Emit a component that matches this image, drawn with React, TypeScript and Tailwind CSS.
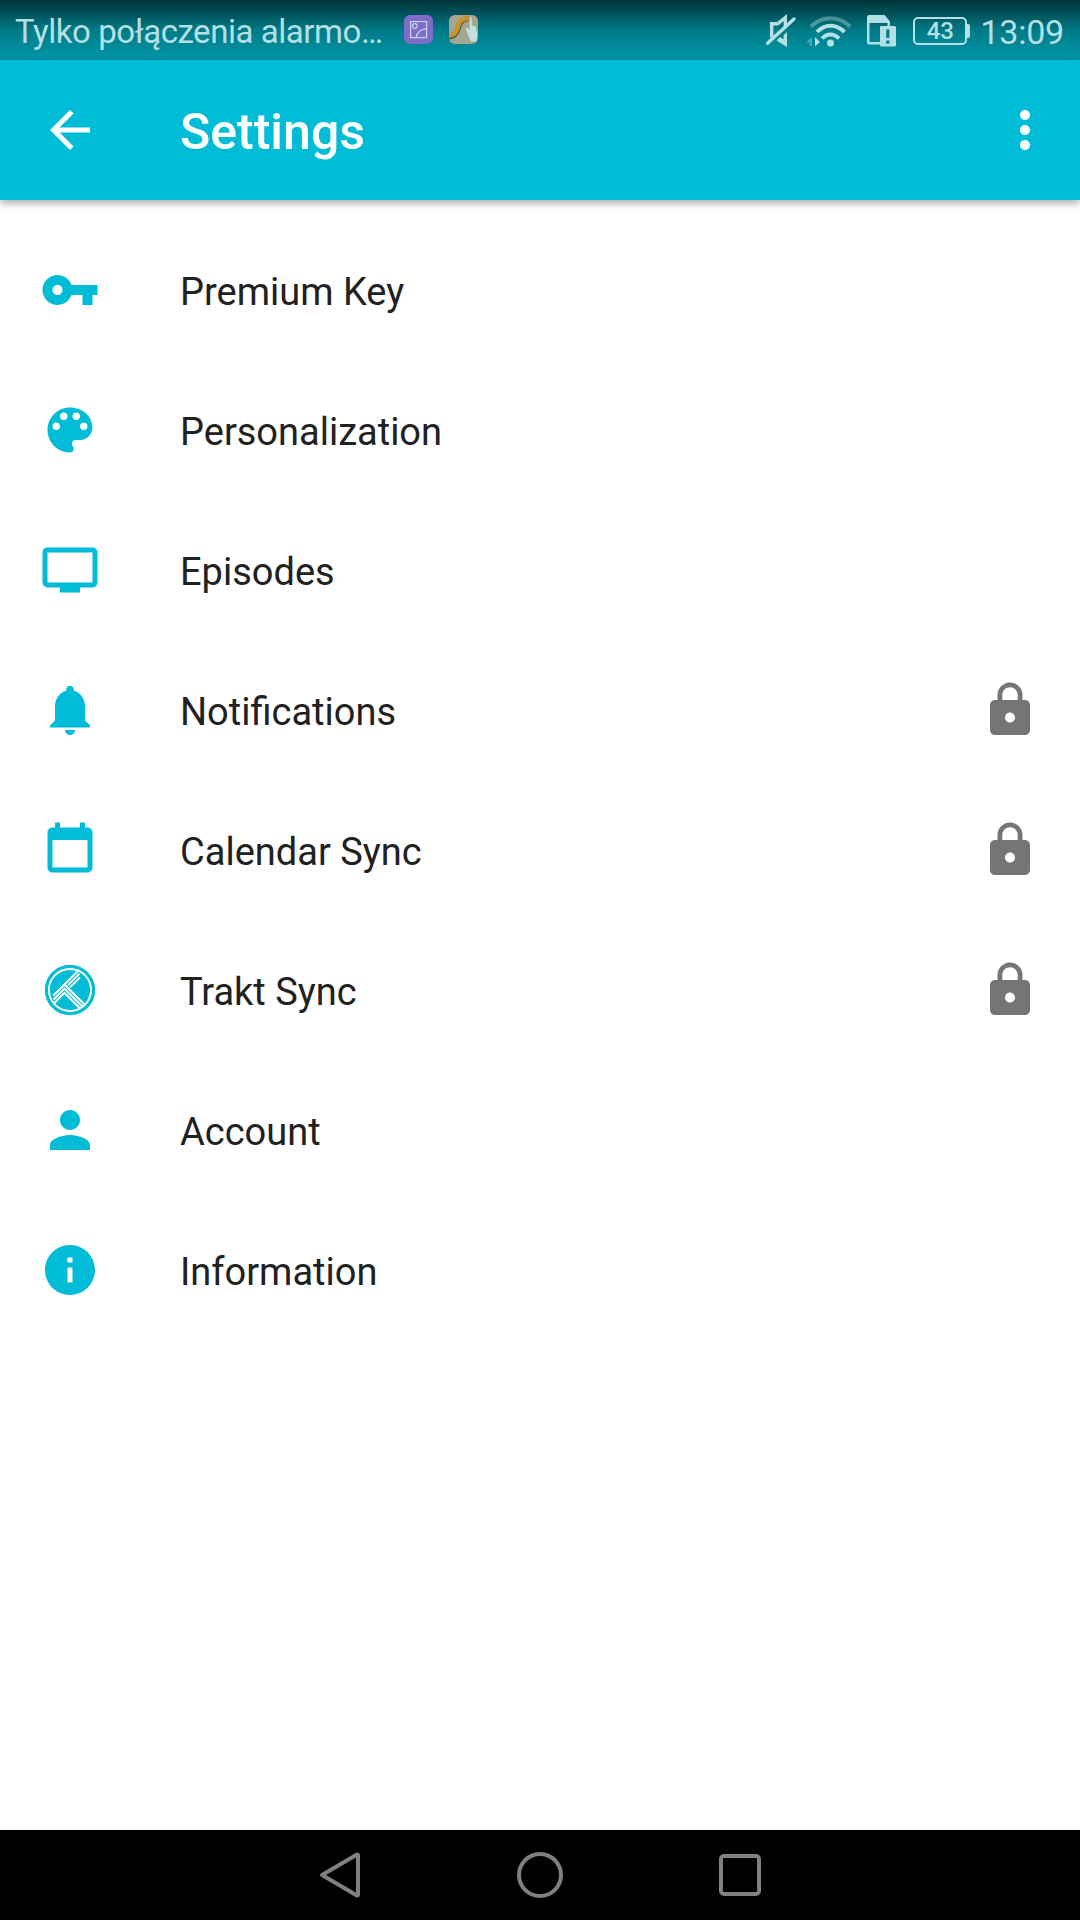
import type { ReactNode } from "react";
import {
  MdArrowBack,
  MdInfo,
  MdLock,
  MdMoreVert,
  MdPerson,
  MdPersonalVideo,
  MdVpnKey,
} from "react-icons/md";
import { SiTrakt } from "react-icons/si";

type SettingsItem = {
  label: string;
  icon: ReactNode;
  locked?: boolean;
};

function PaletteIcon() {
  return (
    <svg viewBox="0 0 24 24" className="size-[60px]" fill="currentColor">
      <path d="M12 3c-4.97 0-9 4.03-9 9s4.03 9 9 9c.83 0 1.5-.67 1.5-1.5 0-.39-.15-.74-.39-1.01-.23-.26-.38-.61-.38-.99 0-.83.67-1.5 1.5-1.5H16c2.76 0 5-2.24 5-5 0-4.42-4.03-8-9-8zm-5.5 9c-.83 0-1.5-.67-1.5-1.5S5.67 9 6.5 9 8 9.67 8 10.5 7.33 12 6.5 12zm3-4C8.67 8 8 7.33 8 6.5S8.67 5 9.5 5s1.5.67 1.5 1.5S10.33 8 9.5 8zm5 0c-.83 0-1.5-.67-1.5-1.5S13.67 5 14.5 5s1.5.67 1.5 1.5S15.33 8 14.5 8zm3 4c-.83 0-1.5-.67-1.5-1.5S16.67 9 17.5 9s1.5.67 1.5 1.5-.67 1.5-1.5 1.5z" />
    </svg>
  );
}

function BellIcon() {
  return (
    <svg viewBox="0 0 24 24" className="size-[60px]" fill="currentColor">
      <path d="M12 22c1.1 0 2-.9 2-2h-4c0 1.1.89 2 2 2zm6-5.8v-5.6c0-3.07-1.8-5.6-4.5-6.28V3.8c0-.83-.67-1.5-1.5-1.5s-1.5.67-1.5 1.5v.52C7.8 5 6 7.52 6 10.6v5.6l-2 1.9v.9h16v-.9z" />
    </svg>
  );
}

function CalendarIcon() {
  return (
    <svg viewBox="0 0 24 24" className="size-[60px]" fill="currentColor">
      <path d="M16 1v2H8V1H6v2H5c-1.11 0-1.99.9-1.99 2L3 19c0 1.1.89 2 2 2h14c1.1 0 2-.9 2-2V5c0-1.1-.9-2-2-2h-1V1h-2zm3 18H5V8h14v11z" />
    </svg>
  );
}

function TraktIcon() {
  return (
    <span className="relative size-[50px]">
      <SiTrakt className="size-[50px]" />
      <span className="absolute inset-0 rounded-full border-3 border-current" />
    </span>
  );
}

const items: SettingsItem[] = [
  { label: "Premium Key", icon: <MdVpnKey className="size-[60px]" /> },
  { label: "Personalization", icon: <PaletteIcon /> },
  { label: "Episodes", icon: <MdPersonalVideo className="size-[60px]" /> },
  { label: "Notifications", icon: <BellIcon />, locked: true },
  { label: "Calendar Sync", icon: <CalendarIcon />, locked: true },
  { label: "Trakt Sync", icon: <TraktIcon />, locked: true },
  { label: "Account", icon: <MdPerson className="size-[60px]" /> },
  { label: "Information", icon: <MdInfo className="size-[60px]" /> },
];

function GalleryBadge() {
  return (
    <svg viewBox="0 0 29 29" className="mb-0.5 ml-[21px] size-[29px]">
      <rect width="29" height="29" rx="6" fill="#7f6cc8" />
      <g fill="none" stroke="#c3d6ee" strokeWidth="1.2">
        <rect x="6.6" y="6.6" width="16" height="16" />
        <circle cx="10.8" cy="11" r="2.4" />
        <path d="M12 22.6c1-5 4.5-8.5 10.6-9" />
      </g>
    </svg>
  );
}

function GestureBadge() {
  return (
    <svg viewBox="0 0 29 29" className="mb-0.5 ml-4 size-[29px]">
      <clipPath id="gesture">
        <rect width="29" height="29" rx="6" />
      </clipPath>
      <g clipPath="url(#gesture)" fill="none">
        <rect width="29" height="29" fill="#a3a78f" />
        <path d="M0 22c5 0 8-3 9.5-9S13 4 20 3.5" stroke="#54604f" strokeWidth="5" />
        <path d="M0 20.5c5 0 7.5-3 9-9S13 3.5 20 3" stroke="#c9932b" strokeWidth="4.5" />
        <path
          d="M20.8 2q1-.8 1.7.5l.5 8 4 1.5 1.3 8-1 6.5h-5.5l-2.5-6-2.8-7q.8-1.5 2.3 0l1.7 1.5z"
          fill="#c6e0e0"
        />
      </g>
    </svg>
  );
}

function MutedIcon() {
  return (
    <svg viewBox="766 12 30 34" className="h-[34px] w-[30px]">
      <g fill="none" stroke="currentColor" strokeWidth="3.4">
        <path d="M771.7 36.5V22.7h6l7.6-6.2V27" />
        <path d="M767.5 42.3l26.5-24.3" strokeLinecap="round" />
      </g>
      <path d="M787 31v15l-10.5-6.5 3.5-3.5 3.6 2.4v-4.2z" fill="currentColor" />
    </svg>
  );
}

function WifiIcon() {
  return (
    <svg viewBox="806 12 46 34" className="ml-2.5 h-[34px] w-[46px]">
      <g fill="none" stroke="currentColor" strokeWidth="4">
        <path d="M811 25.5c11-11 28-11 39 0" opacity=".4" />
        <path d="M817 31c8-8.500 19-8.500 27.500 0" />
        <path d="M822 37.500c5-5.500 12-5.500 17 0" />
      </g>
      <circle cx="830.5" cy="42" r="3.5" fill="currentColor" />
      <path d="M812 36v9h-2.5v-3.5H806z" fill="currentColor" opacity=".4" />
      <path d="M815 36l5 5-5 4.5z" fill="currentColor" />
    </svg>
  );
}

function SimAlertIcon() {
  return (
    <svg viewBox="866 12 30 34" className="ml-3.5 h-[34px] w-[30px]">
      <path
        d="M867 16q0-2 2-2h15.5l5.5 6.5V25h-2.5v-3h-18v19H880v2.5h-11q-2 0-2-2z"
        fill="currentColor"
      />
      <path
        fillRule="evenodd"
        d="M881 25h13.5q1.5 0 1.500 1.500V44q0 1.500-1.500 1.500H881q-1 0-1-1V26q0-1 1-1zm5.200 3.500v8.500h3.200v-8.500zm0 11v3.200h3.200v-3.200z"
        fill="currentColor"
      />
    </svg>
  );
}

function Battery() {
  return (
    <div className="mt-0.5 ml-[17px] flex items-center">
      <div className="flex h-7 w-[54px] items-center justify-center rounded-[5px] border-[2.5px] border-current text-2xl leading-none font-medium">
        43
      </div>
      <div className="h-3.5 w-[3px] rounded-r-xs bg-current" />
    </div>
  );
}

function StatusBar() {
  return (
    <div className="flex h-[60px] items-center bg-linear-to-b from-[#00343a] via-[#007a86] to-[#0098aa] pr-4 pl-[15px] text-[33px] text-[#b4dfe4]">
      <span className="pt-[3px] tracking-[-0.45px] whitespace-nowrap">
        Tylko połączenia alarmo…
      </span>
      <GalleryBadge />
      <GestureBadge />
      <div className="ml-auto flex items-center">
        <MutedIcon />
        <WifiIcon />
        <SimAlertIcon />
        <Battery />
        <span className="ml-2.5 pt-[3px] text-[34px] leading-none tracking-[-0.2px]">
          13:09
        </span>
      </div>
    </div>
  );
}

function AppBar() {
  return (
    <header className="z-10 flex h-[140px] items-center bg-[#00bcd7] pr-[25px] pl-10 text-white shadow-[0_3px_8px_rgba(0,0,0,0.35)]">
      <MdArrowBack className="size-[60px]" />
      <h1 className="ml-20 pt-1 text-[50px] leading-none font-medium">
        Settings
      </h1>
      <MdMoreVert className="ml-auto size-[60px]" />
    </header>
  );
}

function SettingsRow({ item }: { item: SettingsItem }) {
  return (
    <li className="flex h-[140px] items-center px-10">
      <span className="flex size-[60px] items-center justify-center text-[#00bcd7]">
        {item.icon}
      </span>
      <span className="ml-20 pt-1 text-[38px] leading-none">{item.label}</span>
      {item.locked && (
        <MdLock className="ml-auto size-[60px] text-[#757575]" />
      )}
    </li>
  );
}

function NavigationBar() {
  return (
    <nav className="flex h-[90px] items-center bg-black pl-[314px] text-[#808080]">
      <svg viewBox="0 0 50 50" className="size-[50px]" fill="none">
        <path
          d="M8 25L43 4.5q1 0 1 1v39q0 1-1 1z"
          stroke="currentColor"
          strokeWidth="4"
          strokeLinejoin="round"
        />
      </svg>
      <div className="ml-[153px] size-[46px] rounded-full border-4 border-current" />
      <div className="ml-[156px] size-[42px] rounded-[5px] border-4 border-current" />
    </nav>
  );
}

export default function App() {
  return (
    <div className="flex h-[1920px] w-[1080px] flex-col overflow-hidden bg-white font-[Roboto,sans-serif] text-[#212121]">
      <StatusBar />
      <AppBar />
      <ul className="flex-1 pt-5">
        {items.map((item) => (
          <SettingsRow key={item.label} item={item} />
        ))}
      </ul>
      <NavigationBar />
    </div>
  );
}
